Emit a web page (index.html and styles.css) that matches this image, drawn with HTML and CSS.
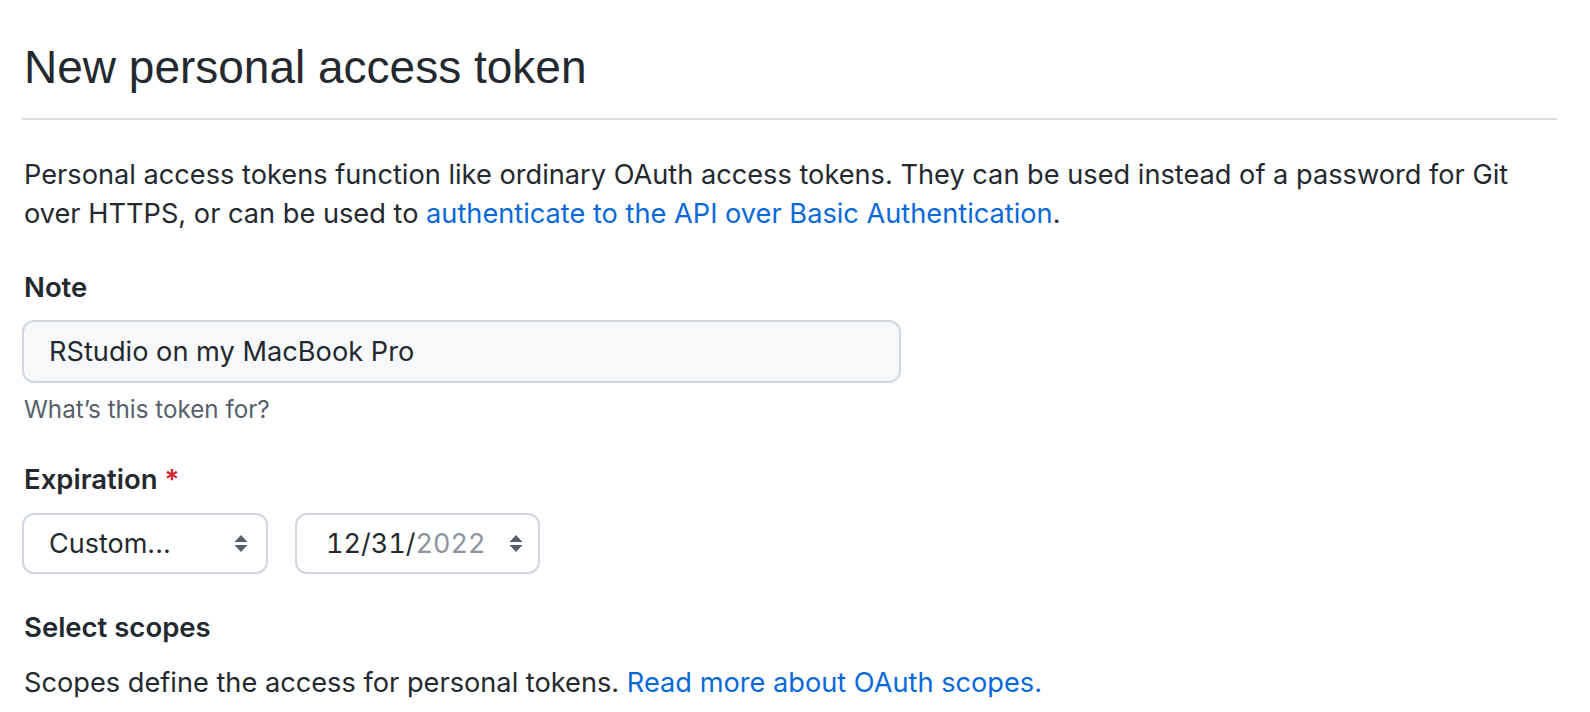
FILE: index.html
```html
<!DOCTYPE html>
<html lang="en">
<head>
<meta charset="utf-8">
<title>New personal access token</title>
<link rel="stylesheet" href="styles.css">
</head>
<body>
<main class="page">
  <h1 class="subhead">New personal access token</h1>
  <p class="intro">Personal access tokens function like ordinary OAuth access tokens. They can be used instead of a password for Git over HTTPS, or can be used to <a class="link" href="#">authenticate to the API over Basic Authentication</a>.</p>

  <div class="field field-note">
    <div class="label">Note</div>
    <div class="text-input">RStudio on my MacBook Pro</div>
    <div class="hint">What’s this token for?</div>
  </div>

  <div class="field field-exp">
    <div class="label">Expiration <span class="req">*</span></div>
    <div class="selects">
      <div class="select select-custom">
        <span class="select-text">Custom...</span>
        <svg class="updown" width="14" height="19" viewBox="0 0 14 19"><path d="M7 1 L13.5 8 H0.5 Z M0.5 11 H13.5 L7 18 Z" fill="#57606a"/></svg>
      </div>
      <div class="select select-date">
        <span class="select-text date-text">12/31/<span class="muted">2022</span></span>
        <svg class="updown" width="14" height="19" viewBox="0 0 14 19"><path d="M7 1 L13.5 8 H0.5 Z M0.5 11 H13.5 L7 18 Z" fill="#57606a"/></svg>
      </div>
    </div>
  </div>

  <div class="field field-scopes">
    <div class="label">Select scopes</div>
    <p class="scopes-desc">Scopes define the access for personal tokens. <a class="link" href="#">Read more about OAuth scopes.</a></p>
  </div>
</main>
</body>
</html>
```
FILE: styles.css
```css
html, body {
  margin: 0;
  padding: 0;
  background: #ffffff;
}
body {
  font-family: Inter, "Liberation Sans", sans-serif;
  color: #24292f;
}
.page {
  width: 1535px;
  padding: 39px 0 0 22px;
}
.subhead {
  margin: 0;
  padding: 0 0 23px 2px;
  font-family: "Liberation Sans", Arial, sans-serif;
  font-size: 46px;
  line-height: 56px;
  font-weight: 400;
  border-bottom: 2px solid #d8dee4;
}
.intro {
  margin: 35px 0 0 2px;
  font-size: 27.2px;
  line-height: 39px;
}
.link {
  color: #0969da;
  text-decoration: none;
}
.label {
  font-size: 27.5px;
  line-height: 39px;
  font-weight: 600;
  padding-left: 2px;
}
.req {
  color: #cf222e;
}
.field-note {
  margin-top: 35px;
}
.text-input {
  margin-top: 13px;
  width: 879px;
  height: 63px;
  box-sizing: border-box;
  border: 2px solid #d0d7de;
  border-radius: 12px;
  background: #f6f8fa;
  padding: 0 0 0 25px;
  font-size: 27.2px;
  line-height: 59px;
}
.hint {
  margin-top: 10px;
  padding-left: 2px;
  font-size: 24.2px;
  line-height: 33px;
  color: #57606a;
}
.field-exp {
  margin-top: 34px;
}
.selects {
  display: flex;
  gap: 27px;
  margin-top: 14px;
}
.select {
  box-sizing: border-box;
  height: 61px;
  width: 246px;
  border: 2px solid #d0d7de;
  border-radius: 12px;
  background: #ffffff;
  display: flex;
  align-items: center;
  justify-content: space-between;
  font-size: 27px;
  line-height: 39px;
}
.select-custom {
  padding: 0 18px 0 25px;
}
.select-date {
  width: 245px;
  padding: 0 15px 0 29px;
}
.date-text {
  font-variant-numeric: tabular-nums;
}
.muted {
  color: #8c959f;
}
.updown {
  display: block;
}
.field-scopes {
  margin-top: 34px;
}
.scopes-desc {
  margin: 16px 0 0 2px;
  font-size: 27.2px;
  line-height: 39px;
}
```
